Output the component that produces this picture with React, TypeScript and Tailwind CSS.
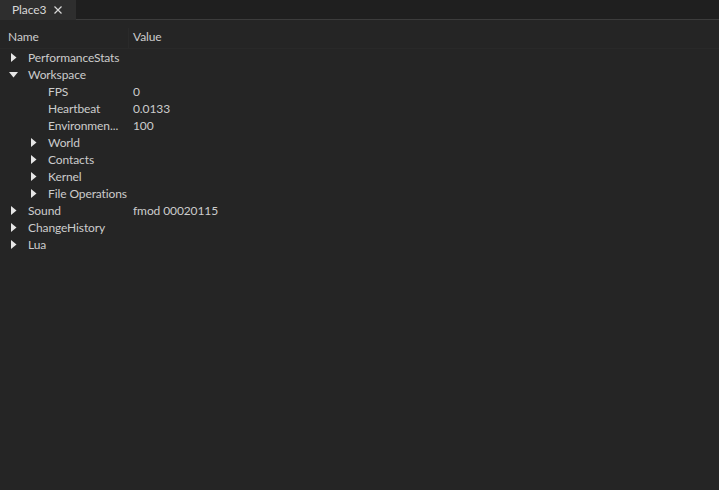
import React from "react";

type Row = {
  name: string;
  value?: string;
  depth: number;
  arrow?: "right" | "down";
};

const rows: Row[] = [
  { name: "PerformanceStats", depth: 0, arrow: "right" },
  { name: "Workspace", depth: 0, arrow: "down" },
  { name: "FPS", value: "0", depth: 2 },
  { name: "Heartbeat", value: "0.0133", depth: 2 },
  { name: "Environmen...", value: "100", depth: 2 },
  { name: "World", depth: 1, arrow: "right" },
  { name: "Contacts", depth: 1, arrow: "right" },
  { name: "Kernel", depth: 1, arrow: "right" },
  { name: "File Operations", depth: 1, arrow: "right" },
  { name: "Sound", value: "fmod 00020115", depth: 0, arrow: "right" },
  { name: "ChangeHistory", depth: 0, arrow: "right" },
  { name: "Lua", depth: 0, arrow: "right" },
];

function Arrow({ dir }: { dir: "right" | "down" }) {
  return dir === "right" ? (
    <svg width="6" height="9" viewBox="0 0 6 9" aria-hidden="true">
      <path d="M0 0 L5.5 4.5 L0 9 Z" fill="#e6e6e6" />
    </svg>
  ) : (
    <svg width="9" height="6" viewBox="0 0 9 6" aria-hidden="true">
      <path d="M0 0 L9 0 L4.5 5.5 Z" fill="#e6e6e6" />
    </svg>
  );
}

export default function App() {
  return (
    <div
      className="flex h-[490px] w-[719px] flex-col bg-[#252525] text-[12px] tracking-[-0.1px] text-[#cccccc]"
      style={{ fontFamily: 'Lato, "Noto Sans", sans-serif' }}
    >
      <div className="flex h-[20px] shrink-0 bg-[#1f1f1f]">
        <div className="flex w-[76px] items-center gap-[8px] bg-[#2e2e2e] pl-[12px] text-[#d8d8d8]">
          <span>Place3</span>
          <svg width="8" height="8" viewBox="0 0 8 8" aria-hidden="true">
            <path d="M0.5 0.5 L7.5 7.5 M7.5 0.5 L0.5 7.5" stroke="#d8d8d8" strokeWidth="1.2" />
          </svg>
        </div>
        <div className="flex-1 border-b border-[#3c3c3c]" />
      </div>

      <div className="flex h-[29px] shrink-0 border-b border-[#292929] pt-[8px] leading-[17px]">
        <div className="w-[129px] border-r border-[#2a2a2a] pl-[8px]">Name</div>
        <div className="pl-[4px]">Value</div>
      </div>

      <div className="flex flex-col">
        {rows.map((r) => {
          const textLeft = r.depth === 0 ? 28 : 48;
          return (
            <div key={r.name} className="flex h-[17px] items-center whitespace-nowrap leading-[17px]">
              <div className="relative flex h-full w-[133px] items-center">
                {r.arrow && (
                  <span
                    className={
                      r.arrow === "down"
                        ? "absolute left-[9px] top-[6px] flex"
                        : r.depth === 0
                          ? "absolute left-[11px] top-[4px] flex"
                          : "absolute left-[31px] top-[4px] flex"
                    }
                  >
                    <Arrow dir={r.arrow} />
                  </span>
                )}
                <span style={{ paddingLeft: textLeft }}>{r.name}</span>
              </div>
              <div>{r.value}</div>
            </div>
          );
        })}
      </div>
    </div>
  );
}
